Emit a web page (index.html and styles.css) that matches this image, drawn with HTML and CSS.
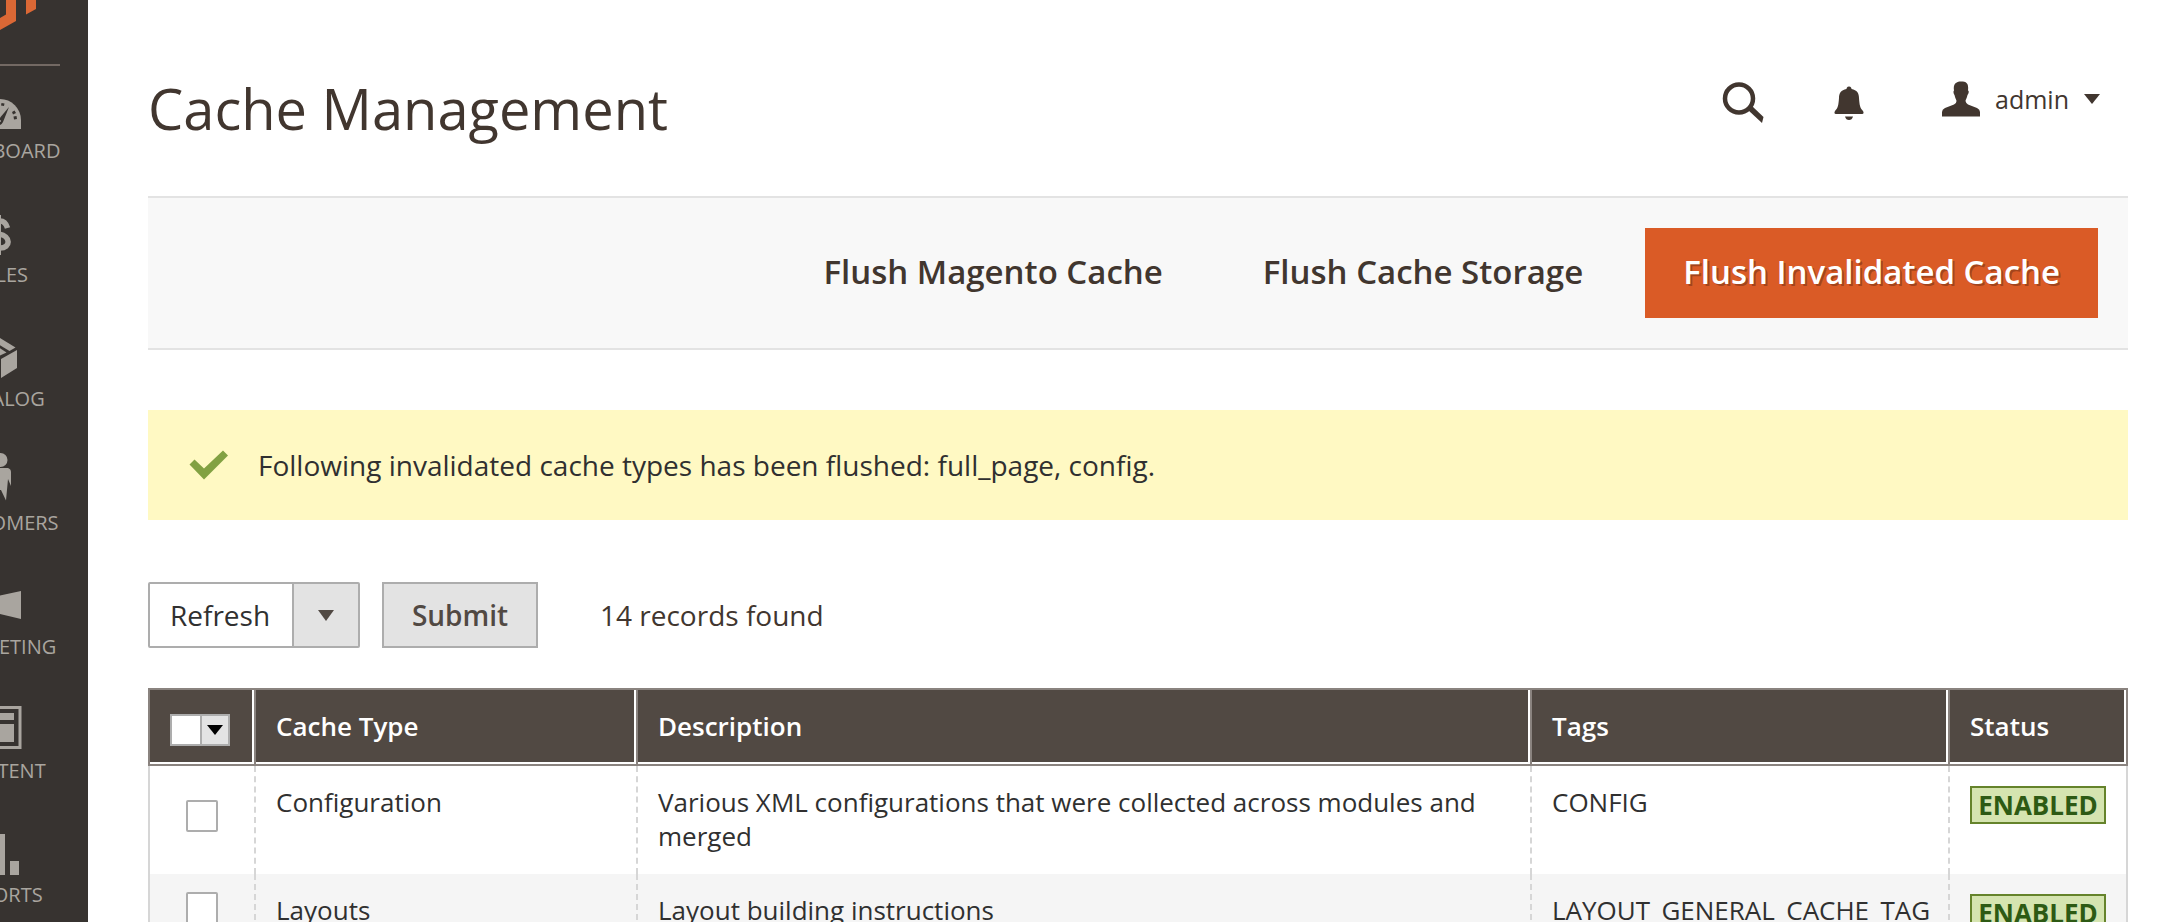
FILE: index.html
```
<!DOCTYPE html>
<html lang="en">
<head>
<meta charset="utf-8">
<title>Cache Management</title>
<link rel="stylesheet" href="styles.css">
</head>
<body>
<div class="page">
  <aside class="sidebar">
    <div class="sidebar-inner">
      <a class="logo" href="#" aria-label="Home">
        <svg width="80" height="64" viewBox="-40 0 80 64" fill="#db6835"><path d="M6 0H16V21L0 30L-16 21V0H-6V14.500L0 18L6 14.500Z"/><path d="M26 0H36V9L26 14.500ZM-26 0H-36V9L-26 14.500Z"/></svg>
      </a>
      <nav class="menu">
        <a class="menu-item" href="#">
          <svg class="menu-icon" viewBox="-32 -32 64 64"><path fill="currentColor" d="M-21 25V16A21 21 0 0 1 21 16V25Z"/><g fill="#373330"><path d="M9 3L3 18Q1 22 -2 21Q-4 19 -2 16Z"/><circle cx="0" cy="17" r="1" fill="#a9a59f"/><path d="M1.500 -1L4.500 -0.500L4 2L1 1.500ZM12 8L14.500 6.500L16 9L13 10.500ZM13.500 12.500L16.500 12L17 15L14 15.500Z"/><path d="M-9 0l3-1 1 3-3 1zM-15 7l3-1 1 3-3 1zM-17 13h3v3h-3z"/></g></svg>
          <span>Dashboard</span>
        </a>
        <a class="menu-item" href="#">
          <svg class="menu-icon" viewBox="-32 -32 64 64"><path fill="none" stroke="currentColor" stroke-width="5.500" d="M7.500 0C6 -5 4 -7 0 -7C-10 -7 -10 4 -1 6C11 8 11 20 0 20C-5 20 -8 18 -8 12"/><path fill="currentColor" d="M-1.500 -13H1V27H-1.500Z"/></svg>
          <span>Sales</span>
        </a>
        <a class="menu-item" href="#">
          <svg class="menu-icon" viewBox="-32 -32 64 64" fill="currentColor"><path d="M-1 -14.500L15.500 -4.500L9.500 -1L-7 -11Z"/><path d="M-9 -9.500L6.500 0.500L-1 4L-17 -5Z"/><path d="M1 7L17 -2V16L1 26ZM-1 7L-17 -2V16L-1 26Z"/></svg>
          <span>Catalog</span>
        </a>
        <a class="menu-item" href="#">
          <svg class="menu-icon" viewBox="-32 -32 64 64" fill="currentColor"><circle cx="0.500" cy="-16" r="7"/><path d="M-8 -8H8Q11 -7 11 -4V10L8 3L6 24.500L1 14L-1 14L-6 24.500L-8 3L-11 10V-4Q-11 -7 -8 -8Z"/></svg>
          <span>Customers</span>
        </a>
        <a class="menu-item" href="#">
          <svg class="menu-icon" viewBox="-32 -32 64 64" fill="currentColor"><path d="M21 -9V19L-2 13.500V-4L21 -9Z"/><path d="M-4 -4V14H-10L-8 24H-14L-17 14H-21V-4Z"/></svg>
          <span>Marketing</span>
        </a>
        <a class="menu-item" href="#">
          <svg class="menu-icon" viewBox="-32 -32 64 64" fill="currentColor"><path fill-rule="evenodd" d="M-21.500 -18H21.500V25H-21.500ZM-18.500 -15V22H18.500V-15Z"/><path d="M-14 -11H14V-4H-14ZM-4 0H14V18H-4ZM-14 0H-8V18H-14Z"/></svg>
          <span>Content</span>
        </a>
        <a class="menu-item" href="#">
          <svg class="menu-icon" viewBox="-32 -32 64 64" fill="currentColor"><path d="M-5 -14H5V27H-5ZM10 13H19V27H10ZM-19 3H-10V27H-19Z"/></svg>
          <span>Reports</span>
        </a>
      </nav>
    </div>
  </aside>

  <main class="main">
    <header class="header">
      <h1 class="title">Cache Management</h1>
      <div class="tools">
        <button class="tool" type="button" aria-label="Search">
          <svg width="42" height="42" viewBox="0 0 42 42"><circle cx="17" cy="16.500" r="14" fill="none" stroke="currentColor" stroke-width="4.500"/><path fill="currentColor" d="M26 28L30 24L41.500 35L40 41Z"/></svg>
        </button>
        <button class="tool" type="button" aria-label="Notifications">
          <svg width="30" height="34" viewBox="0 0 30 34" fill="currentColor"><path d="M15 0.500C17 0.500 17.500 2 17.500 3C23 4 25 7 25 12C25.500 19 26 22 29 25Q30.500 28 28 28H2Q-0.500 28 1 25C4 22 4.500 19 5 12C5 7 7 4 12.500 3C12.500 2 13 0.500 15 0.500Z"/><path d="M11 30.500H19Q18 34 15 34Q12 34 11 30.500Z"/></svg>
        </button>
        <button class="tool account" type="button">
          <svg width="38" height="36" viewBox="0 0 38 36" fill="currentColor"><path d="M19 0.500C24 0.500 27 2 26 9.500C27.500 10 26.500 13 25.500 14C25 17 23.500 19 23.500 20Q24 22.500 26 23.500L35 27Q38 28.500 38 31V35.500H0V31Q0 28.500 3 27L12 23.500Q14.500 22.500 14.500 20C14.500 19 13 17 12.500 14C11.500 13 11 10 12 9.500C11 3 14 0.500 19 0.500Z"/></svg>
          <span>admin</span>
          <svg width="16" height="10" viewBox="0 0 16 10"><path fill="currentColor" d="M0 0H16L8 10Z"/></svg>
        </button>
      </div>
    </header>

    <div class="actions">
      <button class="action" type="button">Flush Magento Cache</button>
      <button class="action" type="button">Flush Cache Storage</button>
      <button class="action action-primary" type="button">Flush Invalidated Cache</button>
    </div>

    <div class="message" role="status">
      <svg width="40" height="30" viewBox="-1 0 40 30"><path fill="#82a142" d="M0.500 14.500L5.500 9.500L15 18.500L34 0.500L39 5.500L15 29.500Z"/></svg>
      <span>Following invalidated cache types has been flushed: full_page, config.</span>
    </div>

    <form class="toolbar">
      <div class="select">
        <select class="select-field" aria-label="Action"><option>Refresh</option></select>
        <span class="select-arrow"><svg width="16" height="11" viewBox="0 0 16 11"><path fill="currentColor" d="M0 0H16L8 11Z"/></svg></span>
      </div>
      <button class="submit" type="button">Submit</button>
      <span class="records">14 records found</span>
    </form>

    <table class="grid">
      <colgroup><col class="col-check"><col class="col-type"><col><col class="col-tags"><col class="col-status"></colgroup>
      <thead>
        <tr>
          <th class="check-cell">
            <div class="select select-small">
              <select class="select-field" aria-label="Mass selection"><option></option></select>
              <span class="select-arrow"><svg width="16" height="10" viewBox="0 0 16 10"><path fill="currentColor" d="M0 0H16L8 10Z"/></svg></span>
            </div>
          </th>
          <th>Cache Type</th>
          <th>Description</th>
          <th>Tags</th>
          <th>Status</th>
        </tr>
      </thead>
      <tbody>
        <tr>
          <td class="check-cell"><input class="checkbox" type="checkbox" aria-label="Configuration"></td>
          <td>Configuration</td>
          <td>Various XML configurations that were collected across modules and merged</td>
          <td>CONFIG</td>
          <td class="status-cell"><span class="badge">Enabled</span></td>
        </tr>
        <tr>
          <td class="check-cell"><input class="checkbox" type="checkbox" aria-label="Layouts"></td>
          <td>Layouts</td>
          <td>Layout building instructions</td>
          <td>LAYOUT_GENERAL_CACHE_TAG</td>
          <td class="status-cell"><span class="badge">Enabled</span></td>
        </tr>
      </tbody>
    </table>
  </main>
</div>
</body>
</html>
```
FILE: styles.css
```
* {
  box-sizing: border-box;
}

body {
  margin: 0;
  height: 100vh;
  overflow: hidden;
  background: #fff;
  color: #303030;
  font-family: "Open Sans", "Noto Sans", sans-serif;
  font-size: 28px;
  line-height: 36px;
}

button,
select {
  font: inherit;
  color: inherit;
  margin: 0;
}

svg {
  display: block;
  flex: none;
}

.page {
  display: flex;
  min-height: 100vh;
}

/* Sidebar: scrolled half out of view on the left */
.sidebar {
  flex: none;
  width: 88px;
  height: 100vh;
  overflow: hidden;
  background: #373330;
}

.sidebar-inner {
  width: 176px;
  margin-left: -88px;
}

.logo {
  display: flex;
  justify-content: center;
  margin: 0 28px 6px;
  border-bottom: 2px solid #736963;
}

.menu-item {
  display: flex;
  flex-direction: column;
  align-items: center;
  height: 124px;
  color: #a9a59f;
  font-size: 20px;
  line-height: 30px;
  text-decoration: none;
  text-transform: uppercase;
}

.menu-icon {
  width: 64px;
  height: 64px;
}

/* Main column */
.main {
  flex: 1;
  min-width: 0;
  padding: 0 42px 0 60px;
}

.header {
  display: flex;
  justify-content: space-between;
  height: 196px;
  padding: 70px 28px 0 0;
  color: #41362f;
}

.title {
  margin: 0;
  font-size: 56px;
  font-weight: 400;
  line-height: 76px;
}

.tools {
  display: flex;
  align-items: flex-start;
  gap: 70px;
  padding-top: 11px;
}

.tool {
  display: flex;
  align-items: center;
  height: 44px;
  padding: 0;
  border: 0;
  background: none;
}

.account {
  gap: 15px;
  height: 36px;
  margin-left: 8px;
  font-size: 25px;
}

.actions {
  display: flex;
  justify-content: flex-end;
  gap: 24px;
  padding: 30px;
  border-top: 2px solid #e3e3e3;
  border-bottom: 2px solid #e3e3e3;
  background: #f8f8f8;
}

.action {
  height: 90px;
  padding: 0 38px 2px;
  border: 0;
  background: none;
  color: #41362f;
  font-size: 33px;
  font-weight: 600;
}

.action-primary {
  background: #da5b26;
  color: #fff;
  text-shadow: 2px 2px 0 rgba(0, 0, 0, 0.25);
}

.message {
  display: flex;
  align-items: center;
  gap: 30px;
  min-height: 110px;
  margin-top: 60px;
  padding: 0 40px;
  background: #fff9c3;
}

.toolbar {
  display: flex;
  align-items: center;
  height: 66px;
  margin: 62px 0 40px;
}

.select {
  display: grid;
  grid-template-rows: 100%;
  grid-template-columns: 1fr 66px;
  width: 212px;
  height: 66px;
  border: 2px solid #adadad;
  border-radius: 2px;
  background: #fff;
}

.select-field {
  grid-area: 1 / 1 / 2 / 3;
  min-width: 0;
  padding: 0 20px;
  border: 0;
  border-radius: 0;
  background: none;
  appearance: none;
}

.select-arrow {
  grid-area: 1 / 2;
  display: flex;
  align-items: center;
  justify-content: center;
  border-left: 2px solid #adadad;
  background: #e3e3e3;
  color: #514943;
  pointer-events: none;
}

.select-small {
  grid-template-columns: 1fr 28px;
  width: 60px;
  height: 32px;
  border-radius: 0;
}

.select-small .select-arrow {
  color: #000;
}

.submit {
  width: 156px;
  height: 66px;
  margin: 0 62px 0 22px;
  padding: 0;
  border: 2px solid #adadad;
  background: #e3e3e3;
  color: #514943;
  font-weight: 600;
}

.records {
  color: #41362f;
}

.grid {
  width: 100%;
  border-collapse: separate;
  border-spacing: 0;
  table-layout: fixed;
  font-size: 26px;
  line-height: 34px;
}

.col-check {
  width: 106px;
}

.col-type {
  width: 382px;
}

.col-tags {
  width: 418px;
}

.col-status {
  width: 180px;
}

.grid th {
  padding: 19px 20px 21px;
  border: 2px solid #8a837f;
  border-right-width: 0;
  background: #514943;
  box-shadow: inset -2px -2px #fff;
  color: #fff;
  font-weight: 600;
  text-align: left;
}

.grid th:last-child {
  border-right-width: 2px;
}

.grid th.check-cell {
  padding: 24px 20px 18px;
}

.grid td {
  padding: 19px 20px 21px;
  border-left: 2px dashed #d6d6d6;
  vertical-align: top;
}

.grid td:first-child {
  border-left-style: solid;
}

.grid td:last-child {
  border-right: 2px solid #d6d6d6;
}

.grid tbody tr:nth-child(even) {
  background: #f5f5f5;
}

.grid td.check-cell {
  padding: 0 36px 8px;
  vertical-align: middle;
}

.grid td.status-cell {
  padding: 20px 20px 18px;
}

.checkbox {
  display: block;
  width: 32px;
  height: 32px;
  margin: 0;
  border: 2px solid #adadad;
  border-radius: 2px;
  background: #fff;
  appearance: none;
}

.badge {
  display: block;
  height: 38px;
  border: 2px solid #65832b;
  background: #d5e4b0;
  color: #2d5a14;
  font-weight: 700;
  text-align: center;
  text-transform: uppercase;
}
```
